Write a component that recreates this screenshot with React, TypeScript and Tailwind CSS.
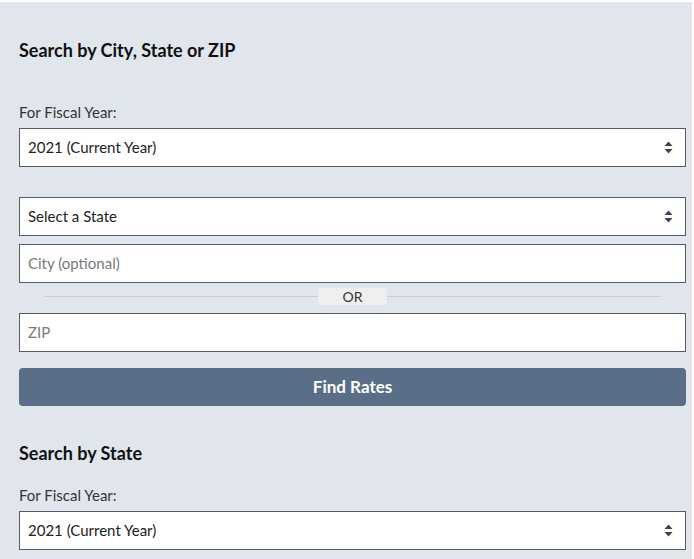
import React from "react";

function SortIcon() {
  return (
    <svg width="9" height="13" viewBox="0 0 9 13" className="shrink-0">
      <path d="M4.5 0.5 L8.5 5 L0.5 5 Z" fill="#3c4452" />
      <path d="M4.5 12.5 L8.5 8 L0.5 8 Z" fill="#3c4452" />
    </svg>
  );
}

function SelectBox({ text }: { text: string }) {
  return (
    <div className="flex h-[39px] items-center justify-between border border-[#555c66] bg-white pl-[8px] pr-[12px] text-[15px] text-[#222]">
      <span>{text}</span>
      <SortIcon />
    </div>
  );
}

function InputBox({ placeholder }: { placeholder: string }) {
  return (
    <div className="flex h-[39px] items-center border border-[#555c66] bg-white pl-[8px] text-[15px] text-[#777b80]">
      <span>{placeholder}</span>
    </div>
  );
}

export default function App() {
  return (
    <div className="min-h-[559px] w-[694px] bg-white pr-[2px] pt-[2px]" style={{ fontFamily: "Lato, 'Noto Sans', sans-serif" }}>
      <div className="min-h-[557px] bg-[#e1e6ed] pl-[19px] pr-[6px] pb-[10px]">
        <h2 className="pt-[36px] text-[18px] font-bold leading-[24px] text-[#111]">Search by City, State or ZIP</h2>
        <div className="mt-[40px] text-[15px] leading-[20px] text-[#333]">For Fiscal Year:</div>
        <div className="mt-[6px]">
          <SelectBox text="2021 (Current Year)" />
        </div>
        <div className="mt-[30px]">
          <SelectBox text="Select a State" />
        </div>
        <div className="mt-[8px]">
          <InputBox placeholder="City (optional)" />
        </div>
        <div className="mt-[5px] flex h-[17px] items-center px-[25px]">
          <div className="h-px flex-1 bg-[#c9ccd0]" />
          <div className="flex h-[17px] w-[69px] items-center justify-center bg-[#efefef] text-[14px] text-[#333]">OR</div>
          <div className="h-px flex-1 bg-[#c9ccd0]" />
        </div>
        <div className="mt-[8px]">
          <InputBox placeholder="ZIP" />
        </div>
        <button className="mt-[16px] flex h-[38px] w-full items-center justify-center rounded-[4px] bg-[#5b6e87] text-[17px] font-bold text-white">
          Find Rates
        </button>
        <h2 className="mt-[35px] text-[18px] font-bold leading-[24px] text-[#111]">Search by State</h2>
        <div className="mt-[20px] text-[15px] leading-[20px] text-[#333]">For Fiscal Year:</div>
        <div className="mt-[6px]">
          <SelectBox text="2021 (Current Year)" />
        </div>
      </div>
    </div>
  );
}
